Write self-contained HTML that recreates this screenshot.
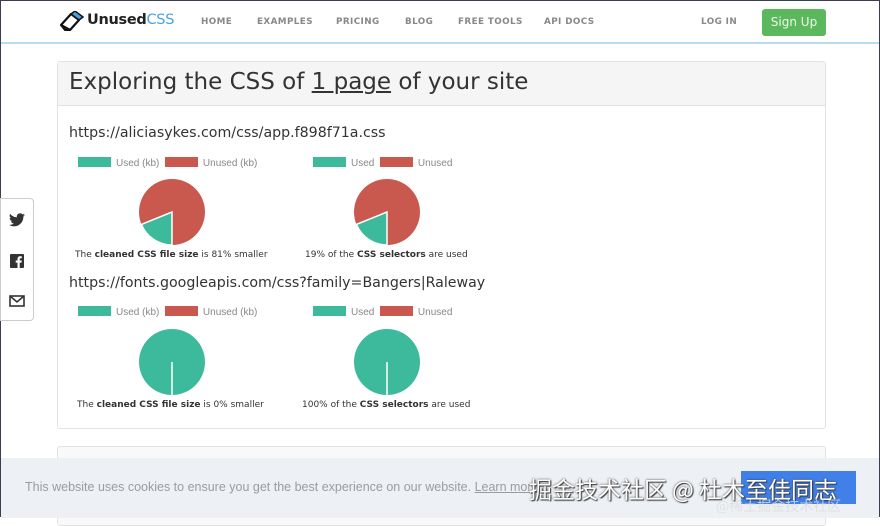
<!DOCTYPE html>
<html><head><meta charset="utf-8"><style>
*{margin:0;padding:0;box-sizing:border-box}
html,body{height:517px}
body{width:880px;overflow:hidden;background:#fff;font-family:"Liberation Sans","DejaVu Sans",sans-serif;position:relative;border:1px solid #3d3d52;border-bottom:none}
.nav{position:absolute;left:0;top:0;width:878px;height:43px;border-bottom:2px solid #b8dcef;background:#fff}
.logo{position:absolute;left:60px;top:11px;font-family:"DejaVu Sans",sans-serif;font-size:14.5px;font-weight:bold;color:#222;letter-spacing:-0.3px}
.logo span{color:#4aa3df;font-weight:normal}
.nl{position:absolute;top:16px;font-family:"DejaVu Sans",sans-serif;font-size:8.8px;font-weight:bold;color:#888;letter-spacing:0.4px}
.btn{position:absolute;left:761px;top:8px;width:64px;height:27px;background:#5cb85c;border-radius:3px;color:#eaffea;font-family:"DejaVu Sans",sans-serif;font-size:12px;text-align:center;line-height:27px}
.card{position:absolute;left:56px;top:60px;width:769px;height:368px;border:1px solid #e2e2e2;border-radius:3px;background:#fff}
.ch{height:44px;background:#f5f5f5;border-bottom:1px solid #e2e2e2;padding:7px 11px;font-family:"DejaVu Sans",sans-serif;font-size:23px;color:#333}
.url{position:absolute;font-family:"DejaVu Sans",sans-serif;font-size:14.2px;color:#333}
.leg{position:absolute;font-size:10px;color:#888}
.sw{display:inline-block;width:33px;height:10px;vertical-align:-1px;margin-right:5px}
.cap{position:absolute;font-family:"DejaVu Sans",sans-serif;font-size:9px;color:#333;white-space:nowrap}
.share{position:absolute;left:-1px;top:197px;width:34px;height:123px;border:1px solid #ccc;border-radius:0 4px 4px 0;background:#fff}
.card2{position:absolute;left:56px;top:445px;width:769px;height:80px;border:1px solid #e2e2e2;border-radius:3px;background:#f9f9f9}
.cookie{position:absolute;left:0;top:457px;width:878px;height:60px;background:#edf0f5;opacity:.97}
.ct{position:absolute;left:24px;top:22px;font-size:12.5px;color:#999}
.cb{position:absolute;left:740px;top:13px;width:115px;height:33px;background:#3b7ce8}
.wm{position:absolute;left:528px;top:13px;font-family:"Noto Sans CJK SC",sans-serif;font-size:23px;color:#fff;text-shadow:0 0 2px #333,1px 1px 1px #333}
.wm2{position:absolute;left:715px;top:38px;font-family:"Noto Sans CJK SC",sans-serif;font-size:14px;color:#ddd;opacity:.8}
</style></head><body>
<div class="nav">
<svg style="position:absolute;left:58px;top:10px" width="26" height="22" viewBox="0 0 26 22"><path d="M2 14 L12 3 L20 9 L11 19 Z" fill="#fff" stroke="#111" stroke-width="2.2" stroke-linejoin="round"/><path d="M12 3 L16 0 L24 6 L20 9 Z" fill="#4aa3df" stroke="#111" stroke-width="1.5"/><path d="M2 14 L6 19 L11 19" fill="none" stroke="#111" stroke-width="2"/></svg>
<div class="logo" style="left:86px">Unused<span>CSS</span></div>
<div class="nl" style="left:200px">HOME</div>
<div class="nl" style="left:256px">EXAMPLES</div>
<div class="nl" style="left:335px">PRICING</div>
<div class="nl" style="left:404px">BLOG</div>
<div class="nl" style="left:457px">FREE TOOLS</div>
<div class="nl" style="left:543px">API DOCS</div>
<div class="nl" style="left:700px">LOG IN</div>
<div class="btn">Sign Up</div>
</div>
<div class="card"><div class="ch">Exploring the CSS of <u>1 page</u> of your site</div></div>
<div class="url" style="left:68px;top:124px">https://aliciasykes.com/css/app.f898f71a.css</div>
<div class="leg" style="left:77px;top:156px"><span class="sw" style="background:#3dba9c"></span>Used (kb) &nbsp;<span class="sw" style="background:#c9594f"></span>Unused (kb)</div>
<div class="leg" style="left:312px;top:156px"><span class="sw" style="background:#3dba9c"></span>Used &nbsp;<span class="sw" style="background:#c9594f"></span>Unused</div>
<svg style="position:absolute;left:0;top:0" width="880" height="517">
<circle cx="171" cy="211" r="33" fill="#c9594f"/><path d="M171 211 L171 244 A33 33 0 0 1 140.4 223.4 Z" fill="#3dba9c" stroke="#fff" stroke-width="1.5"/>
<circle cx="386" cy="211" r="33" fill="#c9594f"/><path d="M386 211 L386 244 A33 33 0 0 1 355.4 223.4 Z" fill="#3dba9c" stroke="#fff" stroke-width="1.5"/>
<circle cx="171" cy="361" r="33" fill="#3dba9c"/><line x1="171" y1="361" x2="171" y2="394" stroke="#fff" stroke-width="1.5"/>
<circle cx="386" cy="361" r="33" fill="#3dba9c"/><line x1="386" y1="361" x2="386" y2="394" stroke="#fff" stroke-width="1.5"/>
</svg>
<div class="cap" style="left:74px;top:249px">The <b>cleaned CSS file size</b> is 81% smaller</div>
<div class="cap" style="left:304px;top:249px">19% of the <b>CSS selectors</b> are used</div>
<div class="url" style="left:68px;top:274px">https://fonts.googleapis.com/css?family=Bangers|Raleway</div>
<div class="leg" style="left:77px;top:305px"><span class="sw" style="background:#3dba9c"></span>Used (kb) &nbsp;<span class="sw" style="background:#c9594f"></span>Unused (kb)</div>
<div class="leg" style="left:312px;top:305px"><span class="sw" style="background:#3dba9c"></span>Used &nbsp;<span class="sw" style="background:#c9594f"></span>Unused</div>
<div class="cap" style="left:76px;top:399px">The <b>cleaned CSS file size</b> is 0% smaller</div>
<div class="cap" style="left:301px;top:399px">100% of the <b>CSS selectors</b> are used</div>
<div class="share">
<svg style="position:absolute;left:8px;top:14px" width="16" height="14" viewBox="0 0 24 20"><path d="M24 2.4a10 10 0 0 1-2.8.8A5 5 0 0 0 23.3.4a10 10 0 0 1-3.1 1.2A4.9 4.9 0 0 0 11.8 6 14 14 0 0 1 1.7.9a4.9 4.9 0 0 0 1.5 6.6 5 5 0 0 1-2.2-.6 4.9 4.9 0 0 0 4 4.9 5 5 0 0 1-2.2.1 4.9 4.9 0 0 0 4.6 3.4A10 10 0 0 1 0 17.3 14 14 0 0 0 7.5 19.5c9 0 14-7.5 14-14v-.6A10 10 0 0 0 24 2.4z" fill="#333"/></svg>
<svg style="position:absolute;left:9px;top:55px" width="14" height="14" viewBox="0 0 14 14"><rect width="14" height="14" rx="1" fill="#333"/><path d="M9.7 14V8.6h1.8l.3-2.1H9.7V5.2c0-.6.2-1 1-1h1.1V2.3a14 14 0 0 0-1.6-.1c-1.6 0-2.7 1-2.7 2.8v1.5H5.7v2.1h1.8V14z" fill="#fff"/></svg>
<svg style="position:absolute;left:8px;top:96px" width="16" height="12" viewBox="0 0 16 12"><rect x="1" y="1" width="14" height="10" fill="none" stroke="#333" stroke-width="1.6"/><path d="M1 1 L8 7 L15 1" fill="none" stroke="#333" stroke-width="1.6"/></svg>
</div>
<div class="card2"></div>
<div class="cookie">
<div class="ct">This website uses cookies to ensure you get the best experience on our website. <span style="text-decoration:underline">Learn more</span></div>
<div class="cb"></div>
<div class="wm">掘金技术社区 @ 杜木至佳同志</div>
<div class="wm2">@稀土掘金技术社区</div>
</div>
</body></html>
